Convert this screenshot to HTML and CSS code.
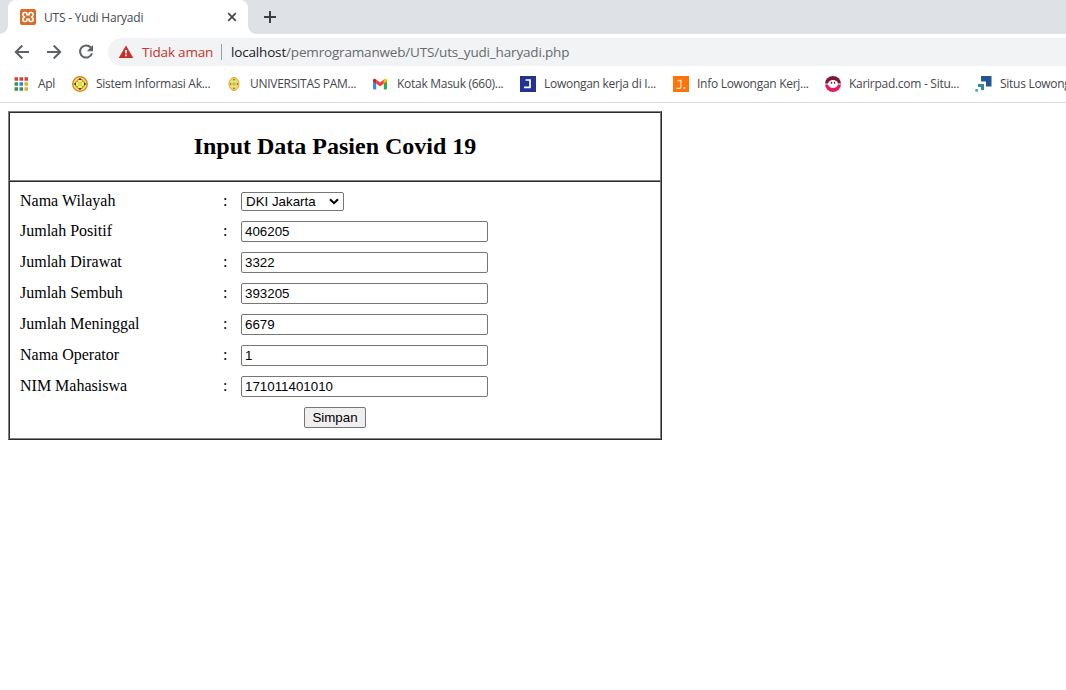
FILE: index.html
```html
<!DOCTYPE html>
<html lang="id">
<head>
<meta charset="utf-8">
<title>UTS - Yudi Haryadi</title>
<link rel="stylesheet" href="styles.css">
</head>
<body>
<header class="browser">
  <div class="tabstrip">
    <div class="tab">
      <svg class="tab-icon" width="16" height="16" viewBox="0 0 16 16"><rect width="16" height="16" rx="2" fill="#dc6b25"/><path d="M4.800 3.500h.8c1 0 1.300.7 1.300 1.500v.6h2.200V5c0-.8.3-1.500 1.300-1.500h.8c1.300 0 1.900.8 1.900 1.900 0 1.200-.6 1.900-1.500 2.600.9.700 1.500 1.400 1.500 2.600 0 1.100-.6 1.900-1.900 1.900h-.8c-1 0-1.300-.7-1.300-1.500v-.6H6.900v.6c0 .8-.3 1.500-1.300 1.500h-.8c-1.300 0-1.900-.8-1.900-1.900 0-1.200.6-1.900 1.500-2.600-.9-.7-1.500-1.400-1.500-2.600 0-1.100.6-1.900 1.900-1.900z" fill="none" stroke="#fff" stroke-width="1.600"/></svg>
      <span class="tab-title">UTS - Yudi Haryadi</span>
      <svg class="tab-close" width="10" height="10" viewBox="0 0 10 10"><path d="M1.200 1.200l7.600 7.600M8.800 1.200L1.200 8.800" stroke="#45484c" stroke-width="1.700"/></svg>
    </div>
    <svg class="new-tab" width="12" height="12" viewBox="0 0 12 12"><path d="M6 0v12M0 6h12" stroke="#3c4043" stroke-width="2"/></svg>
  </div>
  <div class="toolbar">
    <svg class="nav" width="16" height="16" viewBox="0 0 16 16"><path d="M15 8H2.500M8.300 1.500L1.800 8l6.500 6.500" fill="none" stroke="#5f6368" stroke-width="2"/></svg>
    <svg class="nav" width="16" height="16" viewBox="0 0 16 16"><path d="M1 8h12.500M7.700 1.500L14.200 8l-6.500 6.500" fill="none" stroke="#5f6368" stroke-width="2"/></svg>
    <svg class="nav" width="16" height="16" viewBox="0 0 16 16"><path d="M12.800 3.500A6.100 6.100 0 1 0 14 9.300" fill="none" stroke="#5f6368" stroke-width="2"/><path d="M15 1v6.200H8.800z" fill="#5f6368"/></svg>
    <div class="omnibox">
      <svg class="warn" width="16" height="14" viewBox="0 0 16 14"><path d="M8 .5L15.300 13H.7z" fill="#c5302a"/><path d="M8 5v3.500M8 9.600v1.600" stroke="#fff" stroke-width="1.600"/></svg>
      <span class="unsafe">Tidak aman</span>
      <span class="divider"></span>
      <span class="url"><b class="host">localhost</b>/pemrogramanweb/UTS/uts_yudi_haryadi.php</span>
    </div>
  </div>
  <nav class="bookmarks">
    <a class="bm bm-apps"><svg width="14" height="14" viewBox="0 0 14 14"><path d="M.5 2h13.500" stroke="#d93f36" stroke-width="3.500" stroke-dasharray="3.500 1.500"/><path d="M.5 7H4" stroke="#359455" stroke-width="3.500"/><path d="M5.500 7H9" stroke="#2e7de0" stroke-width="3.500"/><path d="M10.500 7H14M10.500 12H14" stroke="#e1ae2c" stroke-width="3.500"/><path d="M.5 12H9" stroke="#359455" stroke-width="3.500" stroke-dasharray="3.500 1.500"/></svg><span>Apl</span></a>
    <a class="bm bm-sia"><svg width="16" height="16" viewBox="0 0 16 16"><circle cx="8" cy="8" r="7.300" fill="#ffe23a" stroke="#d9752b" stroke-width="1.300"/><circle cx="8" cy="8" r="4.600" fill="#f3e98a" stroke="#8a7a2c" stroke-width=".8"/><path d="M5 5l6 6M11 5l-6 6" stroke="#89913b" stroke-width=".8"/><path d="M8 1.800l1.600 2.200H6.400zM8 14.200l1.600-2.200H6.400zM1.800 8L4 6.400v3.200zM14.200 8L12 6.400v3.200z" fill="#27283c"/><circle cx="8" cy="8" r="2.200" fill="#d8e34d"/></svg><span>Sistem Informasi Ak...</span></a>
    <a class="bm bm-unpam"><svg width="12" height="16" viewBox="0 0 12 16"><ellipse cx="6" cy="8" rx="5" ry="6.500" fill="#f9da42" stroke="#e0a052"/><ellipse cx="6" cy="8" rx="3" ry="4.200" fill="#efe28a"/><path d="M6 2.500l1.200 1.800H4.800zM6 13.500l1.200-1.800H4.800zM1.700 8l1.500-1.300v2.600zM10.300 8L8.800 6.700v2.600z" fill="#68603a"/><circle cx="6" cy="8" r="1.700" fill="#b2c843"/></svg><span>UNIVERSITAS PAM...</span></a>
    <a class="bm bm-mail"><svg width="14" height="12" viewBox="0 0 14 12"><path d="M0 2h3.200v9.500H1a1 1 0 0 1-1-1z" fill="#4285f4"/><path d="M10.800 2H14v8.500a1 1 0 0 1-1 1h-2.200z" fill="#34a853"/><path d="M3.200 1.500L7 4.500l3.800-3v4L7 8.500l-3.800-3z" fill="#ea4335"/><path d="M0 2.200C0 .7 1.700 0 3.200 1.500v4L0 3.200z" fill="#c5221f"/><path d="M14 2.200C14 .7 12.300 0 10.800 1.500v4L14 3.200z" fill="#fbbc04"/></svg><span>Kotak Masuk (660)...</span></a>
    <a class="bm bm-jora"><svg width="16" height="16" viewBox="0 0 16 16"><path fill="#233192" d="M0 0h16v16H0z"/><path d="M5.500 4H10v7.300H4" fill="none" stroke="#fff" stroke-width="1.700"/></svg><span>Lowongan kerja di I...</span></a>
    <a class="bm bm-info"><svg width="16" height="16" viewBox="0 0 16 16"><path fill="#ff7308" d="M0 0h16v16H0z"/><path d="M4.500 4.500h3.400v6.200q0 1.700-1.700 1.700H3.500" fill="none" stroke="#ffe4ca" stroke-width="1.300"/><path d="M10.500 11h1.800v1.800h-1.800z" fill="#ffe4ca"/></svg><span>Info Lowongan Kerj...</span></a>
    <a class="bm bm-karir"><svg width="16" height="16" viewBox="0 0 16 16"><path d="M0 8a8 8 0 0 1 16 0z" fill="#7b173e"/><path d="M0 8a8 8 0 0 0 16 0z" fill="#e31c5a"/><path d="M0 7.500h16v1H0z" fill="#fff"/><ellipse cx="8" cy="8" rx="5" ry="4" fill="#fff"/><path d="M6.500 5.800v2M9.500 5.800v2" stroke="#7b173e" stroke-width="1.300"/></svg><span>Karirpad.com - Situ...</span></a>
    <a class="bm bm-situs"><svg width="17" height="16" viewBox="0 0 17 16"><path d="M6 0h10.500v10.500H11V5.500H6z" fill="#245592"/><path d="M3 8h6v6H6v-3H3z" fill="#3786a4"/><path d="M.3 13h2.800v2.700H.3z" fill="#3bb5c3"/></svg><span>Situs Lowong</span></a>
  </nav>
</header>
<main class="page">
  <form class="panel">
    <h2 class="panel-title">Input Data Pasien Covid 19</h2>
    <div class="fields">
      <label>Nama Wilayah</label><span class="colon">:</span>
      <div class="select"><span>DKI Jakarta</span><svg width="10" height="7" viewBox="0 0 10 7"><path d="M1 1.200l4 4 4-4" fill="none" stroke="#000" stroke-width="2"/></svg></div>
      <label>Jumlah Positif</label><span class="colon">:</span><input value="406205">
      <label>Jumlah Dirawat</label><span class="colon">:</span><input value="3322">
      <label>Jumlah Sembuh</label><span class="colon">:</span><input value="393205">
      <label>Jumlah Meninggal</label><span class="colon">:</span><input value="6679">
      <label>Nama Operator</label><span class="colon">:</span><input value="1">
      <label>NIM Mahasiswa</label><span class="colon">:</span><input value="171011401010">
      <button type="button" class="save">Simpan</button>
    </div>
  </form>
</main>
</body>
</html>
```
FILE: styles.css
```css
* { box-sizing: border-box; }
body { margin: 0; background: #fff; overflow: hidden; font-family: "Liberation Serif", serif; }
svg { display: block; flex: none; }
.browser { height: 103px; border-bottom: 1px solid #d9dadc; font-family: "Open Sans", sans-serif; white-space: nowrap; }
.tabstrip { height: 34px; background: #dee1e6; display: flex; align-items: center; padding-left: 8px; }
.tab { position: relative; width: 240px; height: 34px; background: #fff; border-radius: 8px 8px 0 0; display: flex; align-items: center; padding: 0 11px 0 12px; }
.tab::before, .tab::after { content: ""; position: absolute; bottom: 0; width: 8px; height: 8px; }
.tab::before { left: -8px; background: radial-gradient(circle at 0 0, transparent 7.500px, #fff 8px); }
.tab::after { right: -8px; background: radial-gradient(circle at 100% 0, transparent 7.500px, #fff 8px); }
.tab-title { margin-left: 8px; flex: 1; font-size: 12px; letter-spacing: -0.21px; color: #45484c; }
.new-tab { margin-left: 16px; }
.toolbar { height: 36px; display: flex; align-items: center; padding-left: 14px; gap: 16px; }
.omnibox { flex: 1; height: 28px; margin-left: -2px; border-radius: 14px 0 0 14px; background: #f1f3f4; display: flex; align-items: center; padding-left: 10px; font-size: 13.5px; }
.unsafe { margin-left: 8px; width: 71px; color: #c5342d; letter-spacing: -0.18px; }
.divider { width: 1px; height: 16px; margin: 0 9px 0 8px; background: #9b9ea2; }
.url { color: #666a6e; letter-spacing: -0.17px; }
.host { font-weight: 400; color: #202124; }
.bookmarks { height: 28px; display: flex; align-items: center; padding-left: 14px; overflow: hidden; }
.bm { display: flex; align-items: center; flex: none; gap: 8px; font-size: 12px; letter-spacing: -0.28px; color: #45484c; }
.bm span { padding-bottom: 2px; }
.bm-apps { width: 58px; gap: 10px; }
.bm-sia { width: 156px; }
.bm-unpam { width: 145px; gap: 10px; }
.bm-mail { width: 147px; gap: 10px; }
.bm-jora { width: 153px; }
.bm-info { width: 152px; }
.bm-karir { width: 150px; }
.page { padding: 8px; }
.panel { width: 654px; border: 1px solid; border-color: #808080 #2c2c2c #2c2c2c #808080; }
.panel-title { margin: 0; height: 69px; border: 1px solid; border-color: #2c2c2c #808080 #808080 #2c2c2c; display: flex; align-items: center; justify-content: center; font-size: 24px; line-height: 27px; }
.fields { border: 1px solid; border-color: #2c2c2c #808080 #808080 #2c2c2c; padding: 10px; display: grid; grid-template-columns: 203px 18px 247px; grid-template-rows: 19px repeat(7, 21px); row-gap: 10px; align-items: center; font-size: 16px; line-height: 17px; }
.fields label, .colon { padding-bottom: 2px; }
.fields input { width: 247px; height: 21px; margin: 0; padding: 1px 3px; border: 1px solid #767676; border-radius: 2px; font: 13.333px "Liberation Sans", sans-serif; color: #000; background: #fff; }
.select { width: 103px; height: 19px; padding: 0 4px; border: 1px solid #767676; border-radius: 2px; display: flex; align-items: center; justify-content: space-between; font: 13.333px "Liberation Sans", sans-serif; }
.save { grid-column: 1 / -1; width: 62px; height: 21px; margin-left: 284px; padding: 0; border: 1px solid #767676; border-radius: 2px; background: #efefef; font: 13.333px "Liberation Sans", sans-serif; color: #000; }
```
